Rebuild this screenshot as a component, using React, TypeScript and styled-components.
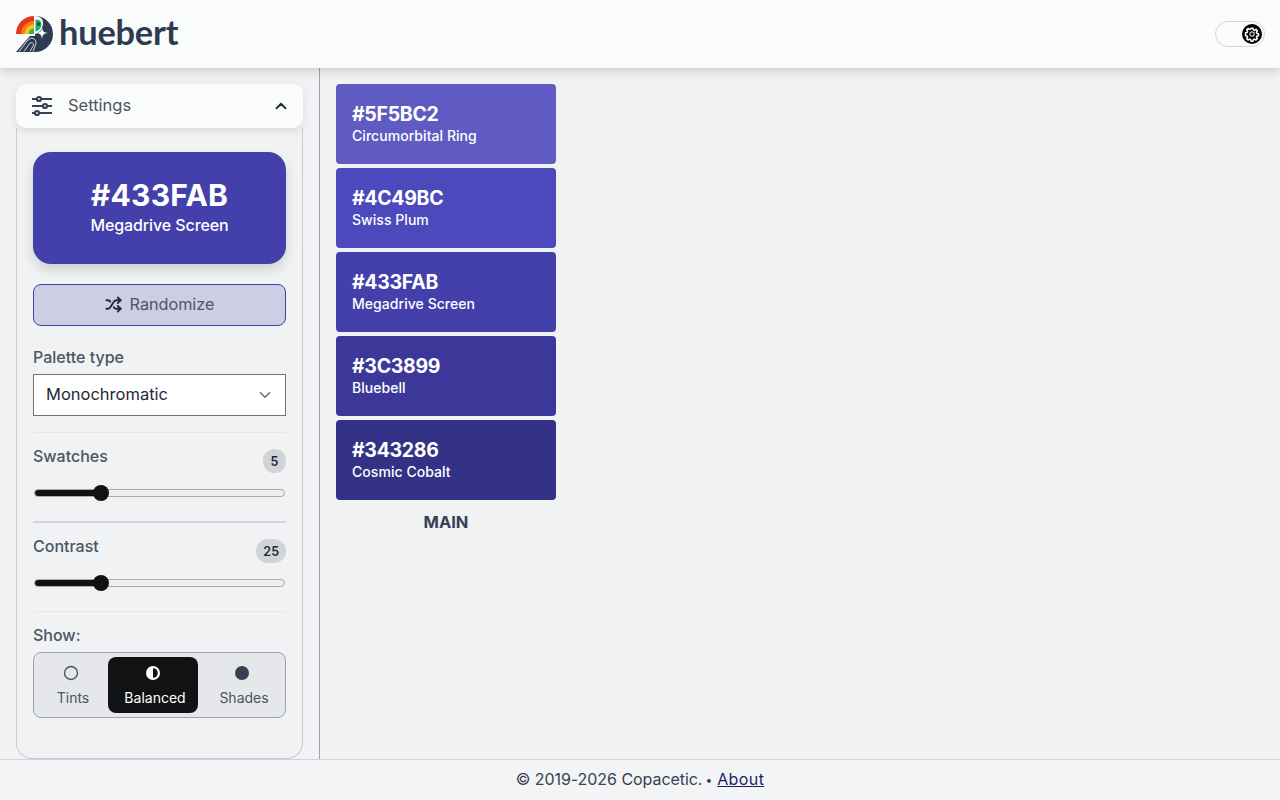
import React from "react";
import styled, { createGlobalStyle } from "styled-components";
import { ChevronUp, ChevronDown, Shuffle } from "lucide-react";

const Global = createGlobalStyle`
  html, body { margin: 0; padding: 0; height: 100%; }
  body { background: #f0f2f4; font-family: Inter, "Liberation Sans", sans-serif; color: #374151; overflow: hidden; }
  * { box-sizing: border-box; }
`;

const Page = styled.div`
  width: 1280px; height: 800px; display: flex; flex-direction: column;
`;
const Header = styled.header`
  height: 68px; flex: none; background: #fafbfb; display: flex; align-items: center; justify-content: space-between;
  padding: 0 15px 0 15px; box-shadow: 0 3px 10px rgba(0,0,0,.16); position: relative; z-index: 2;
`;
const Brand = styled.div`display: flex; align-items: center; gap: 6px;`;
const Wordmark = styled.span`
  font-family: Lato, sans-serif; font-size: 34.4px; font-weight: 700; letter-spacing: -0.2px; color: #2d3a50; line-height: 1; margin-top: -3px;
`;
const Toggle = styled.div`
  width: 50px; height: 26px; border: 1px solid #d1d5db; border-radius: 13px; display: flex; align-items: center; justify-content: flex-end; padding-right: 2px; background: #fafbfb;
`;
const Main = styled.div`flex: 1; display: flex; min-height: 0;`;
const Sidebar = styled.aside`
  width: 320px; flex: none; border-right: 1px solid #9ca3af; padding: 16px 16px 0; display: flex; flex-direction: column;
`;
const SettingsBar = styled.div`
  height: 44px; width: 287px; flex: none; background: #fafbfb; border-radius: 10px; display: flex; align-items: center; padding: 0 13px 0 15px; color: #4b5563; font-size: 16.5px;
  box-shadow: 0 3px 8px rgba(0,0,0,.1); position: relative; z-index: 1;
`;
const SettingsLabel = styled.span`margin: -2px 0 0 15px; flex: 1;`;
const Panel = styled.div`
  flex: 1; width: 287px; border: 1px solid #c8cbd2; border-top: 0; border-radius: 0 0 16px 16px; padding: 24px 16px 0; display: flex; flex-direction: column;
`;
const ColorCard = styled.div`
  height: 112px; flex: none; background: #433fab; color: #fff; border-radius: 18px; display: flex; flex-direction: column; align-items: center; justify-content: center;
  box-shadow: 0 6px 12px rgba(0,0,0,.14);
`;
const CardHex = styled.div`font-size: 30px; font-weight: 700; line-height: 36px; letter-spacing: .25px; margin-top: -2px;`;
const CardName = styled.div`font-size: 16px; font-weight: 500; line-height: 24px; letter-spacing: -.1px;`;
const Randomize = styled.button`
  height: 42px; margin-top: 20px; flex: none; background: #cdcde3; border: 1px solid #433fab; border-radius: 8px; display: flex; align-items: center; justify-content: center; gap: 8px; color: #4b5563; font: 400 16.2px Inter, sans-serif; padding: 0 0 2px;
`;
const FieldLabel = styled.div`font-size: 16px; font-weight: 500; color: #4b5563; line-height: 24px;`;
const PaletteLabel = styled(FieldLabel)`margin-top: 19px; margin-bottom: 5px;`;
const Select = styled.div`
  height: 42px; flex: none; background: #fff; border: 1px solid #6b7280; display: flex; align-items: center; justify-content: space-between; padding: 0 11px 0 12px; color: #1f2937; font-size: 16.5px;
`;
const SelectText = styled.span`margin-top: -2px;`;
const Divider = styled.hr<{ $strong?: boolean; $after: number }>`
  border: 0; height: ${p => (p.$strong ? 2 : 1)}px; margin: ${p => p.$after}px 0 0; background: ${p => (p.$strong ? "#d1d5db" : "#e5e7eb")}; flex: none; width: 100%;
`;
const SliderHead = styled.div`display: flex; justify-content: space-between; align-items: flex-start; margin-top: 11px; height: 30px;`;
const Badge = styled.span`
  min-width: 23px; height: 24px; padding: 0 7px; margin-top: 5px; border-radius: 12px; background: #d1d3d8; color: #1f2937; font-size: 12.5px; font-weight: 600; display: flex; align-items: center; justify-content: center;
`;
const Range = styled.input<{ $pct: number }>`
  appearance: none; -webkit-appearance: none; display: block; width: 251px; height: 16px; margin: 11px 1px 0; background: transparent;
  &::-webkit-slider-runnable-track {
    height: 8px; border-radius: 4px; border: 1px solid #a8abb0;
    background: linear-gradient(to right, #111214 ${p => p.$pct}%, #eceef0 ${p => p.$pct}%);
  }
  &::-webkit-slider-thumb {
    -webkit-appearance: none; width: 16px; height: 16px; border-radius: 50%; background: #111214; margin-top: -5px;
  }
`;
const ShowLabel = styled(FieldLabel)`margin-top: 11px; margin-bottom: 5px;`;
const Seg = styled.div`
  height: 66px; flex: none; border: 1px solid #9ca3af; border-radius: 8px; background: #e5e7eb; display: flex; padding: 4px;
`;
const SegItem = styled.div<{ $active?: boolean; $w: number; $shift: number; $pad: number }>`
  width: ${p => p.$w}px; flex: none; border-radius: 8px; display: flex; flex-direction: column; align-items: center; gap: 8px; padding: 8px 0 0 ${p => p.$pad}px;
  background: ${p => (p.$active ? "#111214" : "transparent")}; color: ${p => (p.$active ? "#fff" : "#4b5563")}; font-size: 14px; line-height: 18px;
  svg { transform: translateX(${p => p.$shift}px); }
`;
const Content = styled.main`flex: 1; padding: 16px; display: flex; flex-direction: column; align-items: flex-start;`;
const Column = styled.div`width: 220px; display: flex; flex-direction: column; gap: 4px;`;
const Swatch = styled.div<{ $bg: string }>`
  height: 80px; background: ${p => p.$bg}; color: #fff; border-radius: 4px; padding: 0 16px 2px; display: flex; flex-direction: column; justify-content: center;
`;
const SwatchHex = styled.div`font-size: 19.5px; font-weight: 700; line-height: 25px; letter-spacing: -.3px;`;
const SwatchName = styled.div`font-size: 14px; font-weight: 500; line-height: 18px; letter-spacing: .05px;`;
const ColumnLabel = styled.div`text-align: center; font-size: 16.5px; font-weight: 700; color: #374151; margin-top: 8px; line-height: 20px;`;
const Footer = styled.footer`
  height: 41px; flex: none; border-top: 1px solid #d1d5db; background: #f3f4f6; display: flex; align-items: center; justify-content: center; color: #374151; font-size: 16px; letter-spacing: -.05px; padding-bottom: 2px;
  a { color: #1e1b6b; letter-spacing: .4px; }
`;
const Bullet = styled.span`font-size: 12px; margin: 0 5px 0 3px;`;

const Logo = () => (
  <svg width="38" height="38" viewBox="0 0 38 38">
    <path d="M20 1 A18 18 0 1 1 20 37 L1 37 L15 21 H20 Z" fill="#2d3a50" />
    <path d="M1 19 A18 18 0 0 1 19 1 V19 Z" fill="#e8351f" />
    <path d="M6 19 A13 13 0 0 1 19 6 V19 Z" fill="#f47b20" />
    <path d="M9.5 19 A9.5 9.5 0 0 1 19 9.5 V19 Z" fill="#fcc419" />
    <path d="M13.5 19 A5.5 5.5 0 0 1 19 13.5 V19 Z" fill="#37b24d" />
    <path d="M20 1 C25 1 28 4 28 8 C28 14 24 18 20 19 Z" fill="#fff" />
    <path d="M20.5 4.5 C24.5 4.5 26.5 6 26.5 9 C26.5 13 23.5 16 20.5 16.5 Z" fill="#17b169" />
    <circle cx="23.5" cy="9" r="1.7" fill="#2d3a50" />
    <path d="M27 12 C27.6 16.5 28.5 17.4 33 18 C28.5 18.6 27.6 19.5 27 24 C26.4 19.5 25.5 18.6 21 18 C25.5 17.4 26.4 16.5 27 12 Z" fill="#fff" />
    <path d="M4 36.5 L13 25 A4.5 4.5 0 0 1 21 28.5 L18 36.5 M9 36.5 L15 28 A2.3 2.3 0 0 1 18.6 30 L15 36.5" fill="none" stroke="#e5e7eb" strokeWidth=".9" />
  </svg>
);

const Gear = () => (
  <svg width="20" height="20" viewBox="0 0 20 20">
    <circle cx="10" cy="10" r="10" fill="#000" />
    <path d="M8.9 3.6h2.2l.4 1.8 1.3.5 1.6-1 1.5 1.5-1 1.6.5 1.3 1.8.4v2.2l-1.8.4-.5 1.3 1 1.6-1.5 1.5-1.6-1-1.3.5-.4 1.8H8.9l-.4-1.8-1.3-.5-1.6 1-1.5-1.5 1-1.6-.5-1.3-1.8-.4V8.7l1.8-.4.5-1.3-1-1.6 1.5-1.5 1.6 1 1.3-.5z" fill="#000" stroke="#fff" strokeWidth="1.7" strokeLinejoin="round" transform="translate(1 1) scale(.9)" />
    <circle cx="10" cy="10" r="2.2" fill="none" stroke="#c9ccd0" strokeWidth="1.2" />
  </svg>
);

const SlidersIcon = () => (
  <svg width="22" height="22" viewBox="0 0 22 22" fill="none" stroke="#374151" strokeWidth="2.2">
    <path d="M1 4h5M10 4h11M1 11h11M16 11h5M1 18h3M8 18h13" />
    <circle cx="8" cy="4" r="2" />
    <circle cx="14" cy="11" r="2" />
    <circle cx="6" cy="18" r="2" />
  </svg>
);

const OpenCircle = () => (
  <svg width="16" height="16" viewBox="0 0 16 16"><circle cx="8" cy="8" r="6.5" fill="none" stroke="currentColor" strokeWidth="1.4" /></svg>
);
const HalfCircle = () => (
  <svg width="16" height="16" viewBox="0 0 16 16">
    <circle cx="8" cy="8" r="7" fill="#fff" />
    <path d="M8 3.2 A4.8 4.8 0 0 1 8 12.8 Z" fill="#111214" />
  </svg>
);
const FullCircle = () => (
  <svg width="16" height="16" viewBox="0 0 16 16"><circle cx="8" cy="8" r="7" fill="#374151" /></svg>
);

const swatches = [
  ["#5F5BC2", "Circumorbital Ring"],
  ["#4C49BC", "Swiss Plum"],
  ["#433FAB", "Megadrive Screen"],
  ["#3C3899", "Bluebell"],
  ["#343286", "Cosmic Cobalt"],
];

export default function App() {
  return (
    <Page>
      <Global />
      <Header>
        <Brand>
          <Logo />
          <Wordmark>huebert</Wordmark>
        </Brand>
        <Toggle><Gear /></Toggle>
      </Header>
      <Main>
        <Sidebar>
          <SettingsBar>
            <SlidersIcon />
            <SettingsLabel>Settings</SettingsLabel>
            <ChevronUp size={18} strokeWidth={2.4} color="#1f2937" />
          </SettingsBar>
          <Panel>
            <ColorCard>
              <CardHex>#433FAB</CardHex>
              <CardName>Megadrive Screen</CardName>
            </ColorCard>
            <Randomize><Shuffle size={17} strokeWidth={2.5} color="#1f2937" />Randomize</Randomize>
            <PaletteLabel>Palette type</PaletteLabel>
            <Select><SelectText>Monochromatic</SelectText><ChevronDown size={18} strokeWidth={2.2} color="#6b7280" /></Select>
            <Divider $after={16} />
            <SliderHead><FieldLabel>Swatches</FieldLabel><Badge>5</Badge></SliderHead>
            <Range type="range" min={0} max={100} defaultValue={25} $pct={25} />
            <Divider $strong $after={20} />
            <SliderHead><FieldLabel>Contrast</FieldLabel><Badge>25</Badge></SliderHead>
            <Range type="range" min={0} max={100} defaultValue={25} $pct={25} />
            <Divider $after={20} />
            <ShowLabel>Show:</ShowLabel>
            <Seg>
              <SegItem $w={70} $shift={-2} $pad={0}><OpenCircle />Tints</SegItem>
              <SegItem $active $w={90} $shift={-2} $pad={4}><HalfCircle />Balanced</SegItem>
              <SegItem $w={88} $shift={-2} $pad={4}><FullCircle />Shades</SegItem>
            </Seg>
          </Panel>
        </Sidebar>
        <Content>
          <Column>
            {swatches.map(([hex, name]) => (
              <Swatch key={hex} $bg={hex}>
                <SwatchHex>{hex}</SwatchHex>
                <SwatchName>{name}</SwatchName>
              </Swatch>
            ))}
            <ColumnLabel>MAIN</ColumnLabel>
          </Column>
        </Content>
      </Main>
      <Footer>© 2019-2026 Copacetic.<Bullet>•</Bullet><a href="#">About</a></Footer>
    </Page>
  );
}
